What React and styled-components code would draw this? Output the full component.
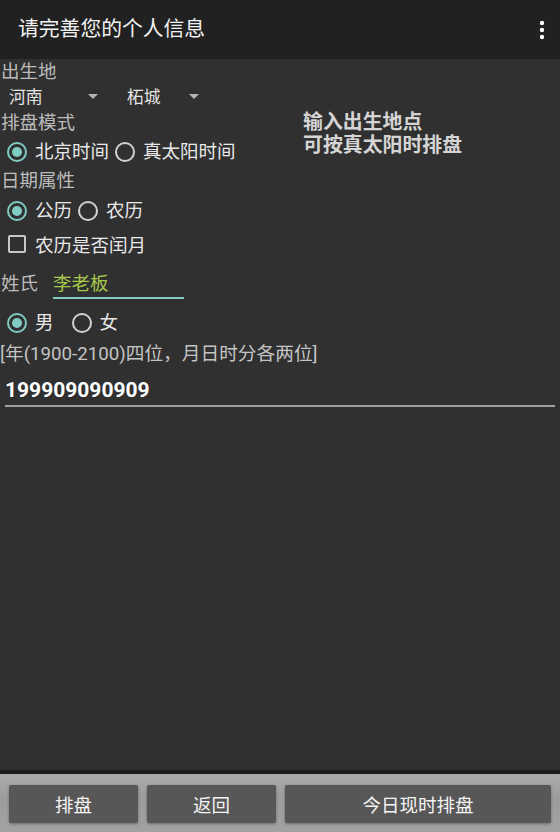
import React from 'react'
import styled, { createGlobalStyle } from 'styled-components'

const GlobalStyle = createGlobalStyle`
  html, body {
    margin: 0;
    padding: 0;
    background: #303030;
  }
  body {
    font-family: Roboto, "Noto Sans CJK SC", sans-serif;
  }
`

const Screen = styled.div`
  width: 560px;
  height: 832px;
  display: flex;
  flex-direction: column;
  background: #303030;
  overflow: hidden;
`

const AppBar = styled.div`
  height: 59px;
  flex-shrink: 0;
  background: #212121;
  display: flex;
  align-items: center;
  padding: 0 14px 0 18px;
  box-sizing: border-box;
`

const Title = styled.div`
  flex: 1;
  color: #f2f2f2;
  font-size: 20.8px;
  line-height: 28px;
  margin-top: -2px;
`

const Body = styled.div`
  flex: 1;
  display: flex;
  flex-direction: column;
`

const Label = styled.div`
  height: ${(p) => p.$h}px;
  line-height: ${(p) => p.$h}px;
  color: #bcbcbc;
  font-size: 18.5px;
  padding-left: 1px;
`

const SpinnerRow = styled.div`
  height: 24px;
  display: flex;
  align-items: center;
`

const Spinner = styled.div`
  width: ${(p) => p.$w}px;
  box-sizing: border-box;
  padding: 0 20px 0 9px;
  display: flex;
  align-items: center;
  justify-content: space-between;
  color: #e4e4e4;
  font-size: 16.8px;
  line-height: 24px;
`

const Caret = styled.span`
  width: 0;
  height: 0;
  border-left: 5px solid transparent;
  border-right: 5px solid transparent;
  border-top: 5.5px solid #b4b4b4;
  margin-top: -1px;
`

const ModeBlock = styled.div`
  display: grid;
  grid-template-columns: 303px 1fr;
`

const Tip = styled.div`
  padding-top: 2px;
  color: #d4d4d4;
  font-size: 19.9px;
  font-weight: 700;
  line-height: 23px;
`

const RadioRow = styled.div`
  height: ${(p) => p.$h}px;
  display: flex;
  align-items: center;
  padding-left: 7px;
  gap: 6px;
`

const RadioItem = styled.label`
  display: flex;
  align-items: center;
  gap: 8px;
  margin-right: ${(p) => p.$trail || 0}px;
  color: #e8e8e8;
  font-size: 18.5px;
  line-height: 26px;
`

const Circle = styled.span`
  width: 20px;
  height: 20px;
  box-sizing: border-box;
  border-radius: 50%;
  border: 2.5px solid ${(p) => (p.$on ? '#80cbc4' : '#d2d2d2')};
  display: flex;
  align-items: center;
  justify-content: center;
  &::after {
    content: '';
    width: 10px;
    height: 10px;
    border-radius: 50%;
    background: ${(p) => (p.$on ? '#80cbc4' : 'transparent')};
  }
`

const CheckRow = styled.div`
  height: 36px;
  display: flex;
  align-items: center;
  padding-left: 8px;
  gap: 9px;
  color: #e8e8e8;
  font-size: 18.5px;
`

const Box = styled.span`
  width: 18px;
  height: 18px;
  box-sizing: border-box;
  border: 2px solid #c8c8c8;
  border-radius: 2px;
`

const NameRow = styled.div`
  height: 44px;
  display: flex;
  align-items: flex-start;
`

const NameLabel = styled.div`
  width: 52px;
  line-height: 44px;
  color: #bcbcbc;
  font-size: 18.5px;
  padding-left: 1px;
`

const NameField = styled.div`
  width: 131px;
  height: 37px;
  box-sizing: border-box;
  padding-top: 9px;
  line-height: 26px;
  border-bottom: 2px solid #80cbc4;
  color: #a5c84a;
  font-size: 18.5px;
`

const Hint = styled.div`
  height: 28px;
  line-height: 28px;
  color: #c4c4c4;
  font-size: 18.7px;
  white-space: nowrap;
`

const NumberField = styled.div`
  margin: 0 5px;
  height: 39px;
  box-sizing: border-box;
  padding-top: 8px;
  line-height: 28px;
  border-bottom: 2px solid #a0a0a0;
  color: #ffffff;
  font-size: 21px;
  font-weight: 700;
`

const Spacer = styled.div`
  flex: 1;
`

const Shade = styled.div`
  height: 4px;
  background: #1c1c1c;
`

const ButtonBar = styled.div`
  height: 58px;
  box-sizing: border-box;
  padding: 11px 9px 9px;
  display: grid;
  grid-template-columns: 129px 129px 1fr;
  gap: 9px;
  background: linear-gradient(#ababab, #9d9d9d 40%, #a2a2a2);
`

const Button = styled.div`
  background: #575757;
  border-radius: 2px;
  box-shadow: 0 1px 3px rgba(0, 0, 0, 0.35);
  color: #f4f4f4;
  font-size: 18.5px;
  display: flex;
  align-items: center;
  justify-content: center;
`

const MenuIcon = () => (
  <svg width="8" height="20" viewBox="0 0 8 20">
    <circle cx="4" cy="3" r="2.2" fill="#fff" />
    <circle cx="4" cy="10" r="2.2" fill="#fff" />
    <circle cx="4" cy="17" r="2.2" fill="#fff" />
  </svg>
)

const Radio = ({ on, trail, children }) => (
  <RadioItem $trail={trail}>
    <Circle $on={on} />
    {children}
  </RadioItem>
)

export default function App() {
  return (
    <Screen>
      <GlobalStyle />
      <AppBar>
        <Title>请完善您的个人信息</Title>
        <MenuIcon />
      </AppBar>
      <Body>
        <Label $h={26}>出生地</Label>
        <SpinnerRow>
          <Spinner $w={118}>
            河南
            <Caret />
          </Spinner>
          <Spinner $w={101}>
            柘城
            <Caret />
          </Spinner>
        </SpinnerRow>
        <ModeBlock>
          <div>
            <Label $h={28}>排盘模式</Label>
            <RadioRow $h={30}>
              <Radio on>北京时间</Radio>
              <Radio>真太阳时间</Radio>
            </RadioRow>
          </div>
          <Tip>
            输入出生地点
            <br />
            可按真太阳时排盘
          </Tip>
        </ModeBlock>
        <Label $h={28}>日期属性</Label>
        <RadioRow $h={31}>
          <Radio on>公历</Radio>
          <Radio>农历</Radio>
        </RadioRow>
        <CheckRow>
          <Box />
          农历是否闰月
        </CheckRow>
        <NameRow>
          <NameLabel>姓氏</NameLabel>
          <NameField>李老板</NameField>
        </NameRow>
        <RadioRow $h={34}>
          <Radio on trail={12}>男</Radio>
          <Radio>女</Radio>
        </RadioRow>
        <Hint>[年(1900-2100)四位，月日时分各两位]</Hint>
        <NumberField>199909090909</NumberField>
        <Spacer />
        <Shade />
        <ButtonBar>
          <Button>排盘</Button>
          <Button>返回</Button>
          <Button>今日现时排盘</Button>
        </ButtonBar>
      </Body>
    </Screen>
  )
}
